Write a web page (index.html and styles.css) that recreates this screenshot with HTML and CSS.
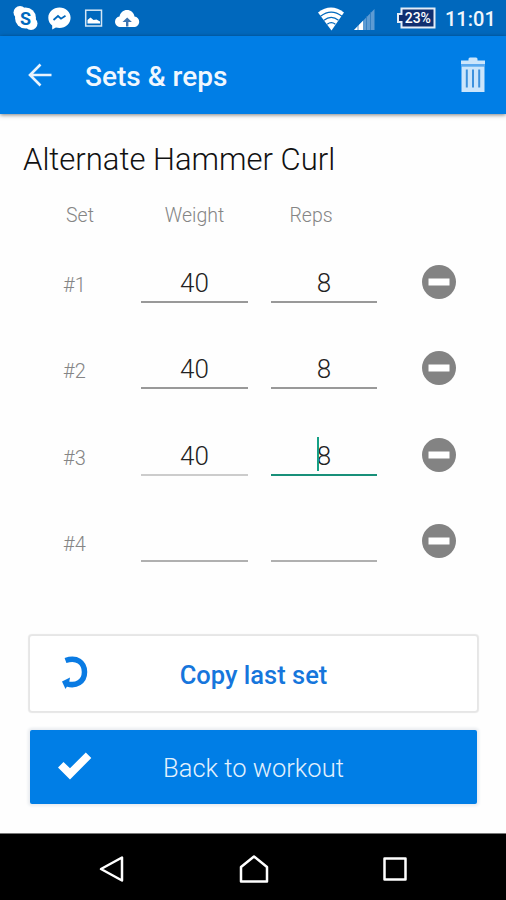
FILE: index.html
```html
<!DOCTYPE html>
<html lang="en">
<head>
    <meta charset="UTF-8">
    <meta name="viewport" content="width=device-width, initial-scale=1.0">
    <title>Sets &amp; reps</title>
    <link rel="stylesheet" href="styles.css">
</head>
<body>
    <div class="status-bar">
        <svg class="notifications" width="150" height="36" viewBox="0 0 150 36" fill="#fff">
            <circle cx="25.5" cy="18" r="10.5"/>
            <circle cx="20" cy="12.500" r="6.500"/>
            <circle cx="31" cy="23.500" r="6.500"/>
            <text class="skype-letter" x="25.500" y="24.500" text-anchor="middle">S</text>
            <path d="M59.500 7.500c-6.300 0-11.200 4.500-11.200 10.200 0 3.200 1.400 6 3.900 7.900v4l3.700-2.200c1.100.3 2.300.5 3.600.5 6.200 0 11.100-4.500 11.100-10.200S65.700 7.500 59.500 7.500z"/>
            <path d="M53.500 20l4.500-4 3 2.700 4.500-3" fill="none" stroke="#0068bd" stroke-width="1.800"/>
            <rect x="85.700" y="10.200" width="15.800" height="15.800" fill="none" stroke="#d3e6f5" stroke-width="1.500"/>
            <path d="M87.500 23.500v-3.500l3-2.500 3 2.500 3-.5 3.500 2v2z"/>
            <path d="M121 27c-3.500 0-6-2.300-6-5.300 0-2.800 2-4.900 4.500-5.200C120.400 12.500 123.300 10 127 10c3.800 0 6.800 2.600 7.500 6.500 2.700.3 4.700 2.400 4.700 5.200 0 3-2.300 5.300-5.500 5.300z"/>
            <path d="M126 26.500v-4.500h-3.500l4.700-4.500 4.700 4.500h-3.500v4.500z" fill="#3a73b0"/>
        </svg>
        <svg class="signals" width="64" height="36" viewBox="0 0 64 36">
            <path d="M1 12.500Q14 2.500 27 12.500L14.500 30.500z" fill="#fff"/>
            <path d="M3.500 16.200Q14.200 8 25 16.200M7 20.200Q14.200 14.600 21.500 20.200M10.200 24.200Q14.300 21.200 18.400 24.200" fill="none" stroke="#0068bd" stroke-width="1.200"/>
            <path d="M37 30L57.500 9v21z" fill="#5d9bd3"/>
            <path d="M37 30l9-9.200V30z" fill="#fff"/>
            <path d="M41 25v5M49.500 16v14M53.500 12v18" stroke="#2c79be" stroke-width=".8"/>
        </svg>
        <svg class="battery" width="40" height="22" viewBox="0 0 40 22">
            <path d="M5.500 1.500h33v19h-33V15H2V7h3.500z" fill="#102f70" stroke="#e4edf7" stroke-width="2"/>
            <text class="battery-text" x="21.800" y="16" text-anchor="middle">23%</text>
        </svg>
        <span class="clock">11:01</span>
    </div>

    <header class="app-bar">
        <svg class="back-icon" width="24" height="24" viewBox="0 0 24 24">
            <path d="M23.500 12H2.500M12.500 1.500L2 12l10.500 10.500" fill="none" stroke="#e8f3fd" stroke-width="2.600"/>
        </svg>
        <h1>Sets &amp; reps</h1>
        <svg class="trash-icon" width="24" height="36" viewBox="0 0 24 36">
            <path d="M0 3.500h7.500V2q0-1.500 1.500-1.500h6Q16.500.5 16.500 2v1.500H24V7H0z" fill="#cbe5fb"/>
            <path d="M0 7h24v2.500H0z" fill="#5ba9ef"/>
            <path d="M.5 9.500h23V35H.5z" fill="#cbe5fb"/>
            <path d="M5.800 12.500v18M12 12.500v18M18.200 12.500v18" stroke="#3c91dd" stroke-width="2"/>
        </svg>
    </header>

    <main class="content">
        <h2>Alternate Hammer Curl</h2>

        <div class="labels">
            <span>Set</span>
            <span>Weight</span>
            <span>Reps</span>
        </div>

        <div class="set-row">
            <span class="set-number">#1</span>
            <span class="field">40</span>
            <span class="field">8</span>
            <svg class="remove" width="34" height="34" viewBox="0 0 34 34"><circle cx="17" cy="17" r="17"/><path d="M6.500 13.500h21v7h-21z"/></svg>
        </div>
        <div class="set-row">
            <span class="set-number">#2</span>
            <span class="field">40</span>
            <span class="field">8</span>
            <svg class="remove" width="34" height="34" viewBox="0 0 34 34"><circle cx="17" cy="17" r="17"/><path d="M6.500 13.500h21v7h-21z"/></svg>
        </div>
        <div class="set-row">
            <span class="set-number">#3</span>
            <span class="field light">40</span>
            <span class="field active">8<i class="caret"></i></span>
            <svg class="remove" width="34" height="34" viewBox="0 0 34 34"><circle cx="17" cy="17" r="17"/><path d="M6.500 13.500h21v7h-21z"/></svg>
        </div>
        <div class="set-row">
            <span class="set-number">#4</span>
            <span class="field empty"></span>
            <span class="field empty"></span>
            <svg class="remove" width="34" height="34" viewBox="0 0 34 34"><circle cx="17" cy="17" r="17"/><path d="M6.500 13.500h21v7h-21z"/></svg>
        </div>

        <div class="actions">
            <button class="btn copy-btn">
                <svg class="btn-icon" width="36" height="36" viewBox="0 0 36 36">
                    <path d="M8.500 5.500C20 1.500 27.500 7.500 27.500 17c0 10-8.500 14.500-17.500 11.800" fill="none" stroke="#0a7be3" stroke-width="5.500"/>
                    <path d="M5 26.500l8-4-1 5.500-3.500 6z" fill="#0a7be3"/>
                </svg>
                <span>Copy last set</span>
            </button>
            <button class="btn workout-btn">
                <svg class="btn-icon" width="36" height="36" viewBox="0 0 36 36">
                    <path d="M1 18.500l5.500-5.500 6.500 6.200L28.800 3.500 34.300 9 13 30.500z" fill="#fff"/>
                </svg>
                <span>Back to workout</span>
            </button>
        </div>
    </main>

    <nav class="nav-bar">
        <svg width="30" height="30" viewBox="0 0 30 30"><path d="M24 3.500v23L3 15z"/></svg>
        <svg width="30" height="30" viewBox="0 0 30 30"><path d="M15 2.500L28 13v14.500H2V13z"/></svg>
        <svg width="30" height="30" viewBox="0 0 30 30"><path d="M4.500 4.500h21v21h-21z"/></svg>
    </nav>
</body>
</html>
```

FILE: styles.css
```css
* {
    box-sizing: border-box;
}

body {
    font-family: Roboto, sans-serif;
    background-color: #fefefe;
    display: flex;
    flex-direction: column;
    height: 100vh;
    margin: 0;
    overflow: hidden;
}

.status-bar {
    display: flex;
    align-items: center;
    height: 36px;
    background-color: #0068bd;
    color: #f0f6fc;
}

.skype-letter {
    font-size: 18px;
    font-weight: 700;
    fill: #0068bd;
}

.signals {
    margin-left: 167px;
}

.battery {
    margin-left: 15px;
}

.battery-text {
    font-size: 14px;
    font-weight: 500;
    fill: #fff;
}

.clock {
    margin-left: 9px;
    font-size: 20px;
    font-weight: 500;
    padding-top: 2px;
}

.app-bar {
    display: flex;
    align-items: center;
    height: 78px;
    padding: 0 21px 0 28px;
    background-color: #007ee6;
    box-shadow: 0 1px 4px rgba(0, 0, 0, 0.5);
}

h1 {
    flex: 1;
    margin: 3px 0 0 33px;
    font-size: 28px;
    font-weight: 500;
    color: #f0f7fe;
}

.content {
    flex: 1;
}

h2 {
    margin: 27px 0 0 23px;
    font-size: 31px;
    line-height: 38px;
    font-weight: 300;
    color: #111;
}

.labels,
.set-row {
    display: grid;
    grid-template-columns: 78px 107px 106px 34px;
    column-gap: 23px;
    padding-left: 40px;
    color: #858585;
}

.labels {
    height: 59.500px;
    padding-top: 25px;
    font-size: 19.500px;
    line-height: 24px;
    font-weight: 300;
    text-align: center;
}

.labels span:first-child {
    padding-left: 2px;
}

.labels span:last-child {
    padding-right: 26px;
}

.set-row {
    height: 86.500px;
    align-items: center;
}

.set-number {
    padding: 6px 0 0 23px;
    font-size: 20px;
    font-weight: 300;
}

.field {
    position: relative;
    height: 42px;
    border-bottom: 2px solid #999;
    font-size: 26px;
    line-height: 44px;
    font-weight: 300;
    text-align: center;
    color: #222;
}

.field.light {
    border-color: #ccc;
}

.field.empty {
    border-color: #b0b0b0;
}

.field.active {
    border-color: #189079;
}

/* text cursor in the focused field */
.caret {
    position: absolute;
    left: 46px;
    top: 3px;
    width: 2px;
    height: 34px;
    background-color: #16a085;
}

.remove {
    margin-left: 22px;
}

.remove circle {
    fill: #838383;
}

.remove path {
    fill: #fff;
}

.actions {
    display: flex;
    flex-direction: column;
    gap: 19px;
    padding: 51px 29px 0 30px;
}

.btn {
    display: flex;
    align-items: center;
    height: 75px;
    padding: 0 63px 0 27px;
    border: none;
    border-radius: 2px;
    font-family: inherit;
    font-size: 25.500px;
    cursor: pointer;
}

.btn span {
    flex: 1;
    padding-top: 3px;
    text-align: center;
    white-space: nowrap;
}

.copy-btn {
    background-color: #fff;
    color: #1676dc;
    font-weight: 500;
    box-shadow: 0 0 1px 2px #e6e6e6;
}

.workout-btn {
    height: 74px;
    background-color: #007ee6;
    color: #e3f1fd;
    font-weight: 300;
    box-shadow: 0 0 3px 2px #e9ecf0;
}

.nav-bar {
    display: flex;
    align-items: center;
    justify-content: center;
    gap: 111px;
    height: 67px;
    padding: 4px 0 0 1px;
    border-top: 1px solid #777;
    background-color: #000;
}

.nav-bar path {
    fill: none;
    stroke: #fff;
    stroke-width: 2.500;
    stroke-linejoin: round;
}
```
